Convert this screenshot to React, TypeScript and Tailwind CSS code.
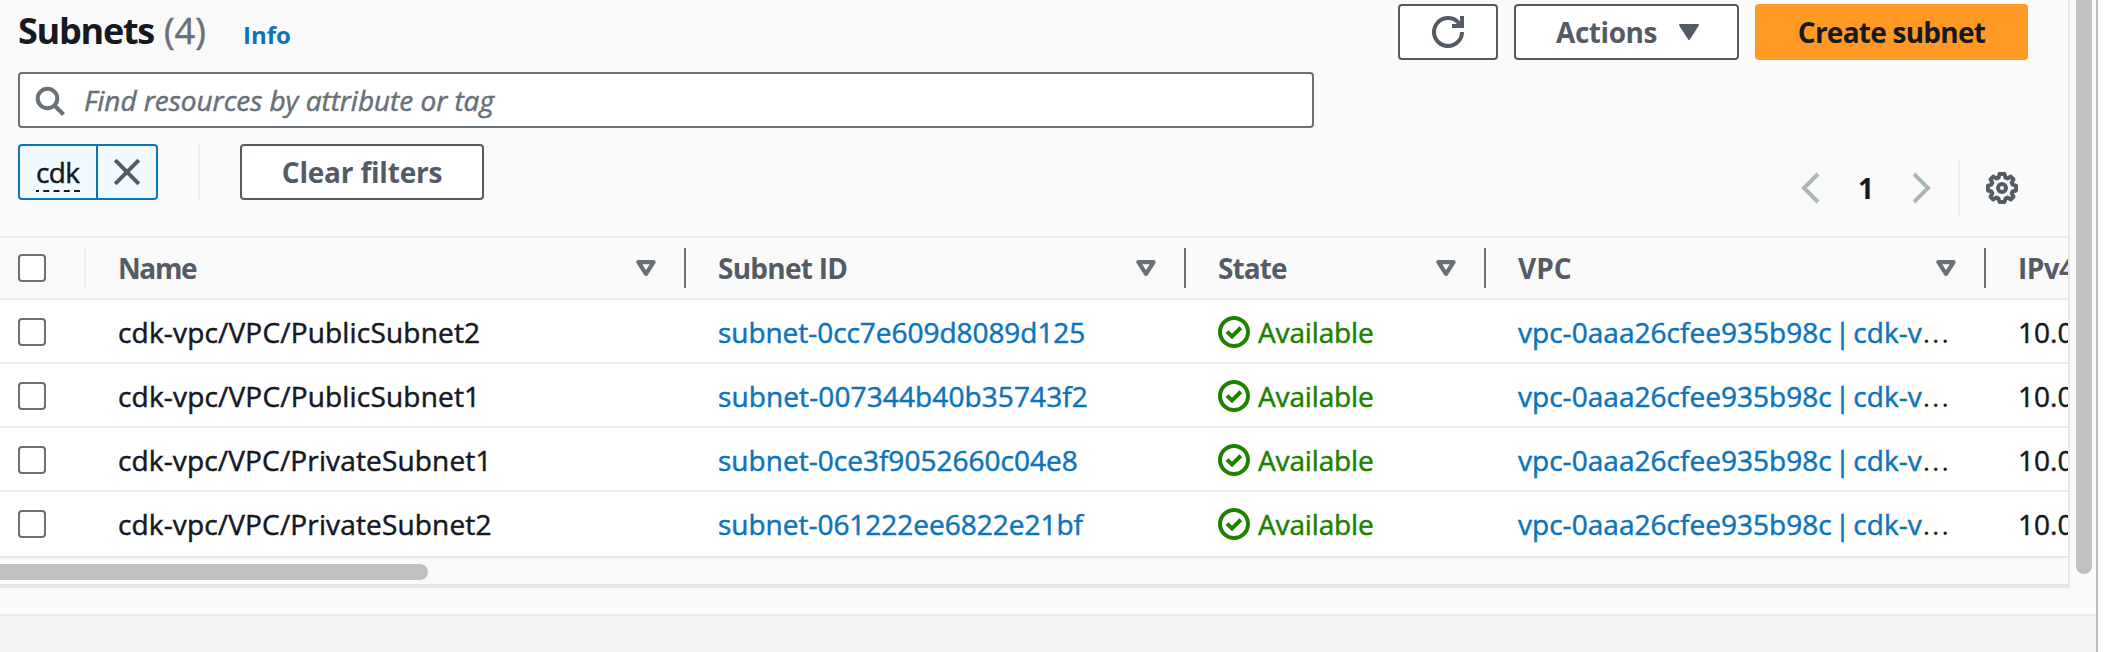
import type { ReactNode } from "react";

type Subnet = { name: string; nameTracking: string; id: string; idTracking: string };

const subnets: Subnet[] = [
  { name: "cdk-vpc/VPC/PublicSubnet2", nameTracking: "tracking-[0.18px]", id: "subnet-0cc7e609d8089d125", idTracking: "tracking-[-0.05px]" },
  { name: "cdk-vpc/VPC/PublicSubnet1", nameTracking: "tracking-[0.18px]", id: "subnet-007344b40b35743f2", idTracking: "tracking-[0.11px]" },
  { name: "cdk-vpc/VPC/PrivateSubnet1", nameTracking: "tracking-[0.15px]", id: "subnet-0ce3f9052660c04e8", idTracking: "tracking-[0.02px]" },
  { name: "cdk-vpc/VPC/PrivateSubnet2", nameTracking: "tracking-[0.15px]", id: "subnet-061222ee6822e21bf", idTracking: "tracking-[-0.02px]" },
];

const stroke = "[-webkit-text-stroke:0.5px_currentColor]";

function SearchIcon() {
  return (
    <svg width="32" height="32" viewBox="0 0 32 32" fill="none" stroke="#687078" strokeWidth="4">
      <circle cx="13.5" cy="13.5" r="9.8" />
      <path d="M20.5 20.5 29.5 29.5" />
    </svg>
  );
}

function CloseIcon() {
  return (
    <svg width="32" height="32" viewBox="0 0 32 32" fill="none" stroke="#545b64" strokeWidth="4">
      <path d="M4.2 4.2 27.8 27.8M27.8 4.2 4.2 27.8" />
    </svg>
  );
}

function RefreshIcon() {
  return (
    <svg width="32" height="32" viewBox="0 0 32 32" fill="none" stroke="#545b64" strokeWidth="4">
      <path d="M30 16A14 14 0 1 1 27.5 8" />
      <path d="M30 0V10H20" />
    </svg>
  );
}

function CaretFilled() {
  return (
    <svg width="20" height="16" viewBox="0 0 20 16" fill="#545b64" stroke="#545b64" strokeWidth="2" strokeLinejoin="round">
      <path d="M1 1H19L10 15Z" />
    </svg>
  );
}

function CaretOutline() {
  return (
    <svg width="20" height="16" viewBox="0 0 20 16" fill="none" stroke="#687078" strokeWidth="4.2" strokeLinejoin="round">
      <path d="M2.4 2.1H17.6L10 13.8Z" />
    </svg>
  );
}

function Chevron({ right = false }: { right?: boolean }) {
  return (
    <svg width="19" height="32" viewBox="0 0 19 32" fill="none" stroke="#aab7b8" strokeWidth="4">
      {right ? <path d="M2 2 16 16 2 30" /> : <path d="M17 2 3 16 17 30" />}
    </svg>
  );
}

function GearIcon() {
  return (
    <svg width="32" height="32" viewBox="0 0 32 32" fill="none" stroke="#545b64" strokeWidth="4" strokeLinejoin="round">
      <path d="M13.5 2h5l1 3.6 2 .8 3.3-1.8 2.7 2.7-1.8 3.3.8 2 3.5 1v4.9l-3.5 1-.8 2 1.8 3.2-2.7 2.8-3.3-1.9-2 .9-1 3.5h-5l-1-3.5-2-.9-3.3 1.9-2.7-2.8 1.8-3.2-.8-2-3.5-1v-4.9l3.5-1 .8-2-1.8-3.3 2.7-2.7 3.3 1.8 2-.8Z" />
      <circle cx="16" cy="16" r="4" />
    </svg>
  );
}

function StatusIcon() {
  return (
    <svg width="32" height="32" viewBox="0 0 32 32" fill="none" stroke="#1d8102" strokeWidth="4">
      <circle cx="16" cy="16" r="14" />
      <path d="M9 15.6 14 20.4 22.8 11.8" />
    </svg>
  );
}

function Checkbox() {
  return <span className="block size-7 rounded-[4px] border-2 border-[#687078] bg-white" />;
}

function HeaderCell({ children, sortable = true }: { children: ReactNode; sortable?: boolean }) {
  return (
    <div className="flex min-w-0 items-center justify-between pl-8">
      <span className="font-bold whitespace-nowrap text-[#545b64]">{children}</span>
      {sortable && (
        <div className="flex h-10 w-[50px] shrink-0 items-center justify-between border-r-2 border-[#687078]">
          <CaretOutline />
        </div>
      )}
    </div>
  );
}

const columns = "grid grid-cols-[86px_600px_500px_300px_500px_82px]";

export default function App() {
  return (
    <div className="flex h-[652px] w-[2120px] overflow-hidden bg-white font-['Open_Sans','Noto_Sans',sans-serif] text-[28px] leading-10 text-[#16191f]">
      <div className="flex w-[2098px] flex-col border-r-2 border-[#b9c1c2] bg-[#fafafa]">
        <div className="flex h-[614px] gap-1.5">
          <section className="flex h-[588px] w-[2070px] shrink-0 flex-col overflow-hidden border-r-2 border-b-4 border-[#e7e8e8]">
            <div className="flex h-[236px] flex-col">
              <div className="flex h-[72px] justify-between pl-[18px] pr-10">
                <div className="flex items-baseline pt-[11px]">
                  <h1 className="w-[146px] text-[36px] font-bold tracking-[-1.25px]">Subnets</h1>
                  <span className={`${stroke} w-[79px] text-[36px] text-[#687078]`}>(4)</span>
                  <a className="text-[24px] font-bold text-[#0d74ba]">Info</a>
                </div>
                <div className="flex gap-4 pt-1">
                  <button className="flex h-14 w-[100px] items-center justify-center rounded-[4px] border-2 border-[#545b64] bg-white">
                    <RefreshIcon />
                  </button>
                  <button className="flex h-14 w-[225px] items-center justify-between rounded-[4px] border-2 border-[#545b64] bg-white pr-[38px] pl-10 font-bold tracking-[-0.44px] text-[#545b64]">
                    Actions
                    <CaretFilled />
                  </button>
                  <button className="flex h-14 w-[273px] items-center justify-center rounded-[4px] bg-[#ff9926] font-bold tracking-[-0.75px]">
                    Create subnet
                  </button>
                </div>
              </div>
              <div className="ml-[18px] flex h-14 w-[1296px] items-center rounded-[4px] border-2 border-[#687078] bg-white pl-[14px]">
                <div className="w-[50px] pt-[2px]"><SearchIcon /></div>
                <span className={`${stroke} tracking-[-0.04px] text-[#687078] italic`}>Find resources by attribute or tag</span>
              </div>
              <div className="flex grow justify-between pt-4 pr-[50px] pl-[18px]">
                <div className="flex h-14">
                  <div className="flex w-[140px] rounded-[4px] border-2 border-[#0d74ba] bg-[#f1faff]">
                    <div className="flex w-[78px] items-center border-r-2 border-[#0d74ba] pl-4">
                      <span className={`${stroke} relative w-11 tracking-[-0.6px]`}>
                        cdk
                        <svg className="absolute bottom-0 left-0" width="44" height="2" stroke="#16191f" strokeWidth="2">
                          <path d="M0 1H44" strokeDasharray="6 4.25" strokeDashoffset="3" />
                        </svg>
                      </span>
                    </div>
                    <div className="flex grow items-center justify-center"><CloseIcon /></div>
                  </div>
                  <div className="ml-10 w-[2px] bg-[#eaeded]" />
                  <button className="ml-10 flex w-[244px] items-center justify-center rounded-[4px] border-2 border-[#545b64] bg-white font-bold tracking-[-0.2px] text-[#545b64]">
                    Clear filters
                  </button>
                </div>
                <div className="mt-4 flex h-14 items-center">
                  <Chevron />
                  <span className="w-[92px] text-center font-bold">1</span>
                  <Chevron right />
                  <div className="ml-[27px] h-14 w-[2px] bg-[#eaeded]" />
                  <div className="ml-[26px]"><GearIcon /></div>
                </div>
              </div>
            </div>

            <div className={`${columns} h-16 shrink-0 items-center border-y-2 border-[#eaeded]`}>
              <div className="flex h-10 items-center border-r-2 border-[#eaeded] pl-[18px]"><Checkbox /></div>
              <HeaderCell><span className="tracking-[-1.4px]">Name</span></HeaderCell>
              <HeaderCell><span className="tracking-[-0.75px]">Subnet ID</span></HeaderCell>
              <HeaderCell><span className="tracking-[-0.9px]">State</span></HeaderCell>
              <HeaderCell>VPC</HeaderCell>
              <HeaderCell sortable={false}><span className="tracking-[-0.6px]">IPv4 CIDR</span></HeaderCell>
            </div>

            {subnets.map((s, i) => (
              <div
                key={s.name}
                className={`${columns} ${stroke} shrink-0 items-center border-b-2 bg-white pt-[2px] whitespace-nowrap ${i === subnets.length - 1 ? "h-[66px] border-[#e7e8e8] pb-[2px]" : "h-16 border-[#eaeded]"}`}
              >
                <div className="pl-[18px]"><Checkbox /></div>
                <div className={`${s.nameTracking} pl-8`}>{s.name}</div>
                <div className={`${s.idTracking} pl-8 text-[#0d74ba]`}>{s.id}</div>
                <div className="flex items-center gap-2 pl-8 text-[#1d8102]">
                  <StatusIcon />
                  <span className="tracking-[-0.14px]">Available</span>
                </div>
                <div className="flex h-10 items-baseline pl-8 [word-spacing:-4.2px]">
                  <a className="tracking-[0.03px] text-[#0d74ba]">vpc-0aaa26cfee935b98c | cdk-v</a>
                  <span className="ml-px tracking-[2px] [-webkit-text-stroke:0px]">...</span>
                </div>
                <div className="overflow-hidden pl-8">10.0.0.0/18</div>
              </div>
            ))}

            <div className="pt-1.5">
              <div className="h-4 w-[428px] rounded-r-full bg-[#c1c1c1]" />
            </div>
          </section>
          <div className="h-[574px] w-4 rounded-b-full bg-[#c1c1c1]" />
        </div>
        <div className="grow border-t-2 border-[#eaeded] bg-[#f1f3f3]" />
      </div>
    </div>
  );
}
